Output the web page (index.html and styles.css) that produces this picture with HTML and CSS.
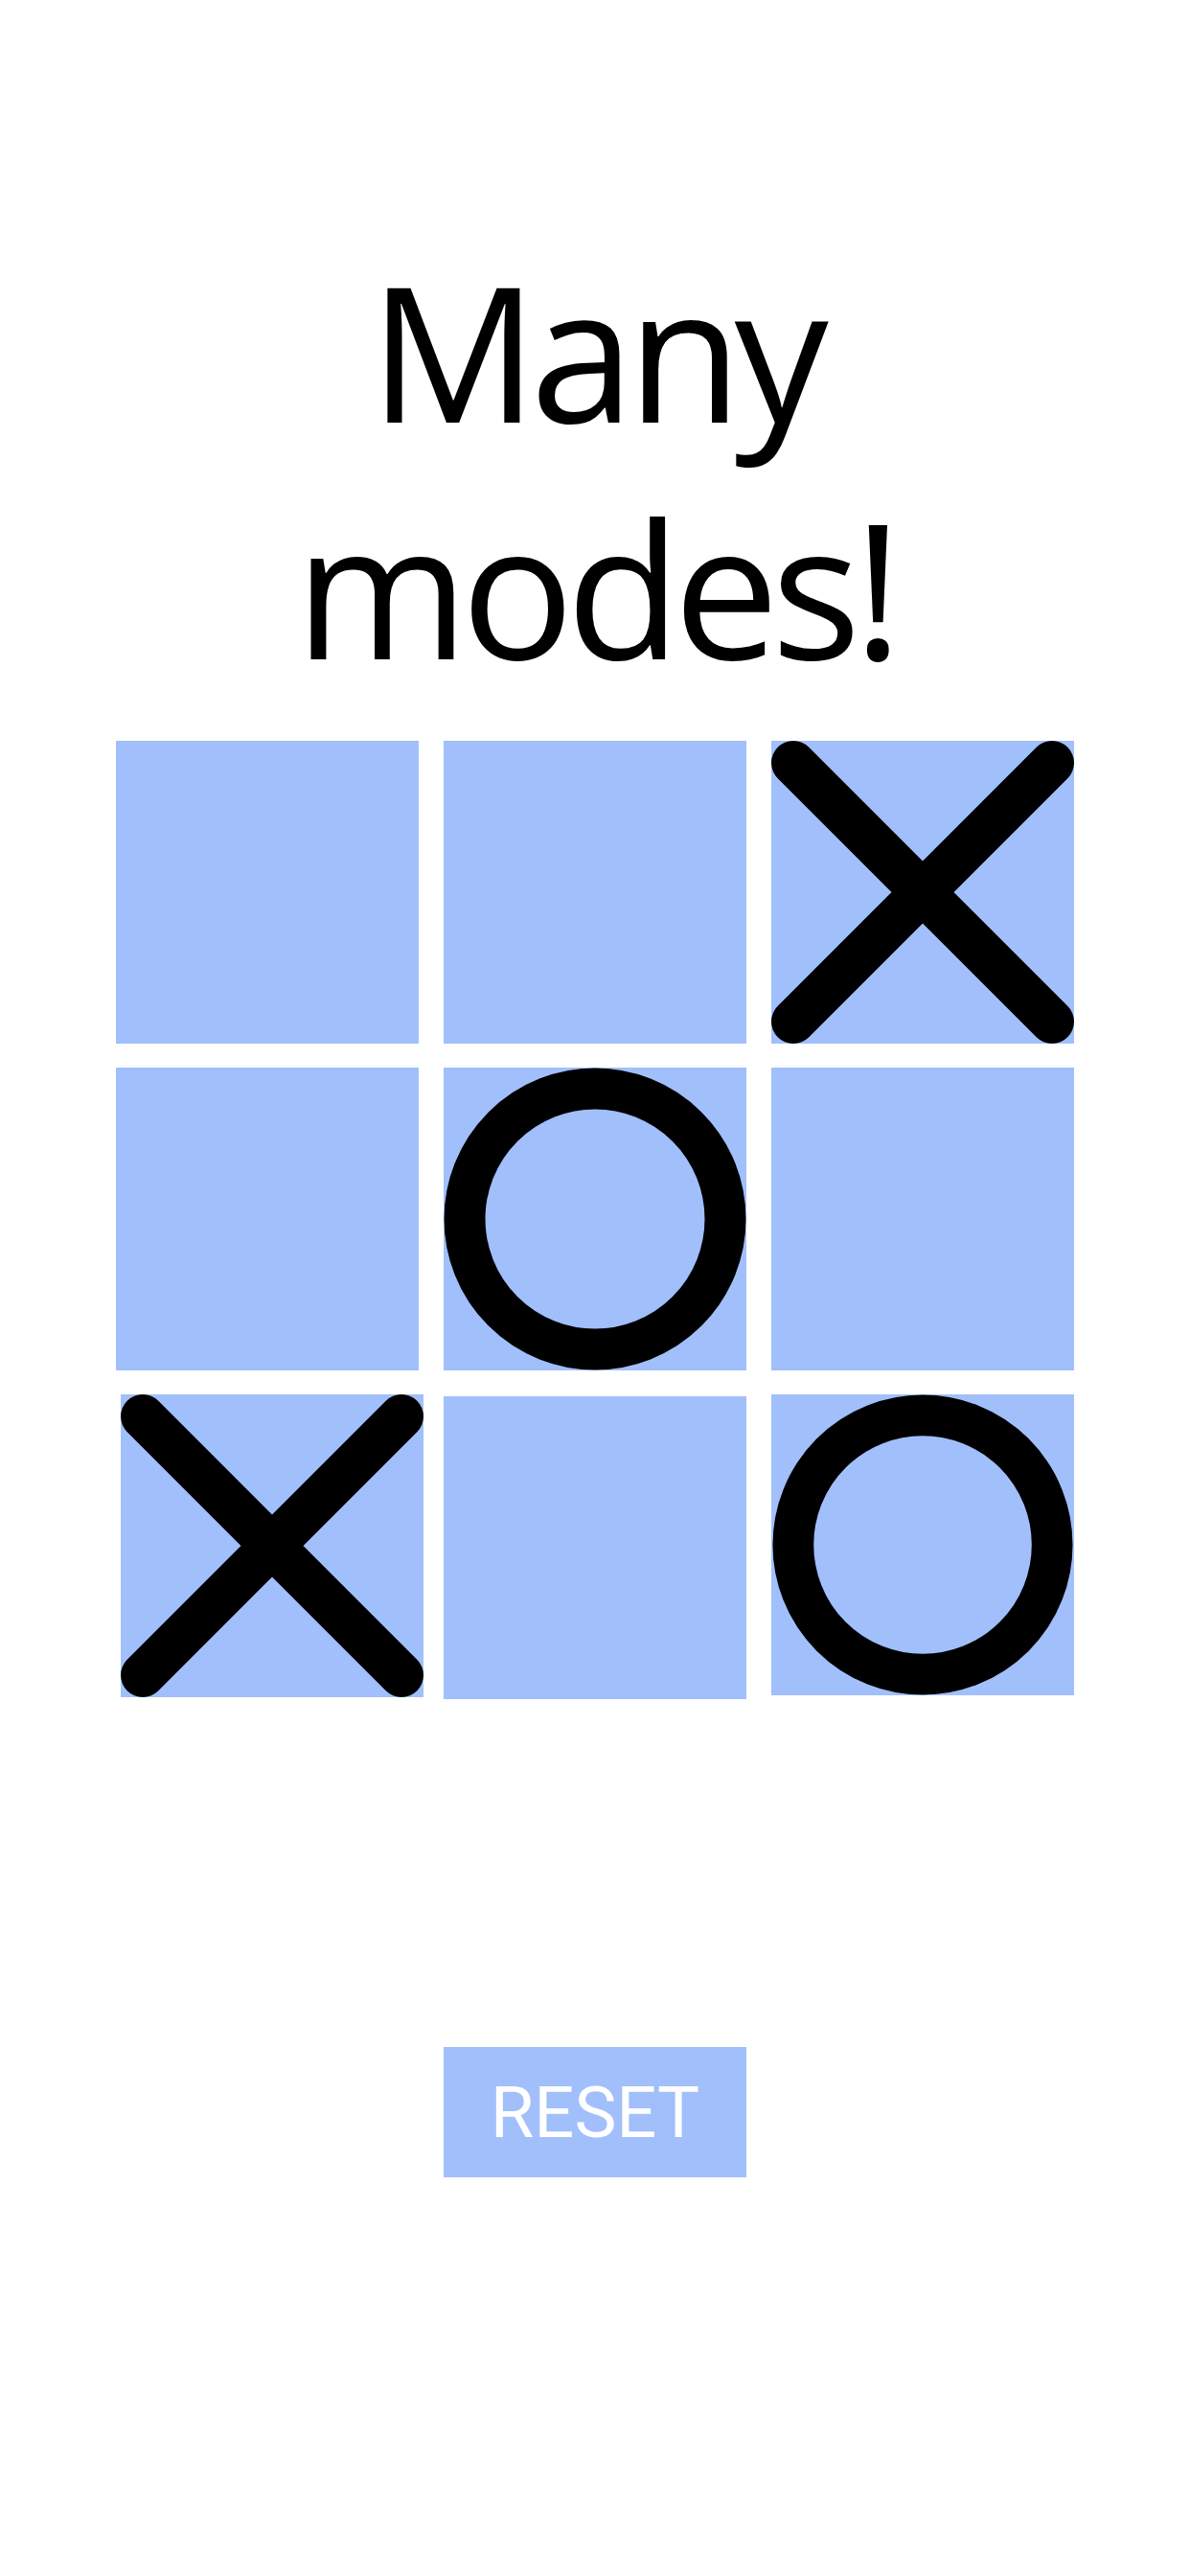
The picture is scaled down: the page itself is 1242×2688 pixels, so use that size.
FILE: index.html
```
<!DOCTYPE html>
<html lang="en">
<head>
    <meta charset="UTF-8">
    <meta name="viewport" content="width=device-width, initial-scale=1.0">
    <title>Tic Tac Toe</title>
    <link rel="stylesheet" href="styles.css">
</head>
<body>
    <main class="screen">
        <h1 class="title">Many modes!</h1>

        <!-- Tablero 3x3 -->
        <div class="board">
            <div class="cell"></div>
            <div class="cell"></div>
            <div class="cell">
                <svg class="mark" viewBox="0 0 316 316"><path d="M23 23 L293 293 M293 23 L23 293" /></svg>
            </div>

            <div class="cell"></div>
            <div class="cell">
                <svg class="mark" viewBox="0 0 316 316"><circle cx="158" cy="158" r="136" /></svg>
            </div>
            <div class="cell"></div>

            <div class="cell shift-right">
                <svg class="mark" viewBox="0 0 316 316"><path d="M23 23 L293 293 M293 23 L23 293" /></svg>
            </div>
            <div class="cell shift-down"></div>
            <div class="cell short">
                <svg class="mark" viewBox="0 0 316 316"><circle cx="158" cy="158" r="136" /></svg>
            </div>
        </div>

        <button class="reset-btn">RESET</button>
    </main>
</body>
</html>
```
FILE: styles.css
```
body {
    margin: 0;
    background-color: #ffffff;
    font-family: "Open Sans", "Noto Sans", sans-serif;
}

.screen {
    min-height: 2688px;
    padding-top: 242px;
    box-sizing: border-box;
    display: flex;
    flex-direction: column;
    align-items: center;
}

/* Titulo */
.title {
    width: 700px;
    margin: 0;
    text-align: center;
    font-size: 196px;
    font-weight: 400;
    line-height: 247px;
    letter-spacing: -8px;
    color: #000000;
}

/* Tablero */
.board {
    margin-top: 37px;
    display: grid;
    grid-template-columns: repeat(3, 316px);
    grid-template-rows: repeat(3, 316px);
    column-gap: 26px;
    row-gap: 25px;
}

.cell {
    background-color: #a1bffb;
}

.cell.shift-right {
    margin-left: 5px;
    margin-right: -5px;
}

.cell.shift-down {
    margin-top: 2px;
    margin-bottom: -2px;
}

.cell.short {
    margin-bottom: 2px;
}

.mark {
    display: block;
    width: 100%;
    height: 100%;
    fill: none;
    stroke: #000000;
}

.mark path {
    stroke-width: 46;
    stroke-linecap: round;
}

.mark circle {
    stroke-width: 43;
}

/* Boton */
.reset-btn {
    margin-top: 365px;
    width: 316px;
    height: 136px;
    padding: 0;
    border: none;
    background-color: #a1bffb;
    color: #ffffff;
    font-family: Roboto, "Liberation Sans", sans-serif;
    font-size: 74px;
    font-weight: 400;
    display: flex;
    justify-content: center;
    align-items: center;
    cursor: pointer;
}
```
